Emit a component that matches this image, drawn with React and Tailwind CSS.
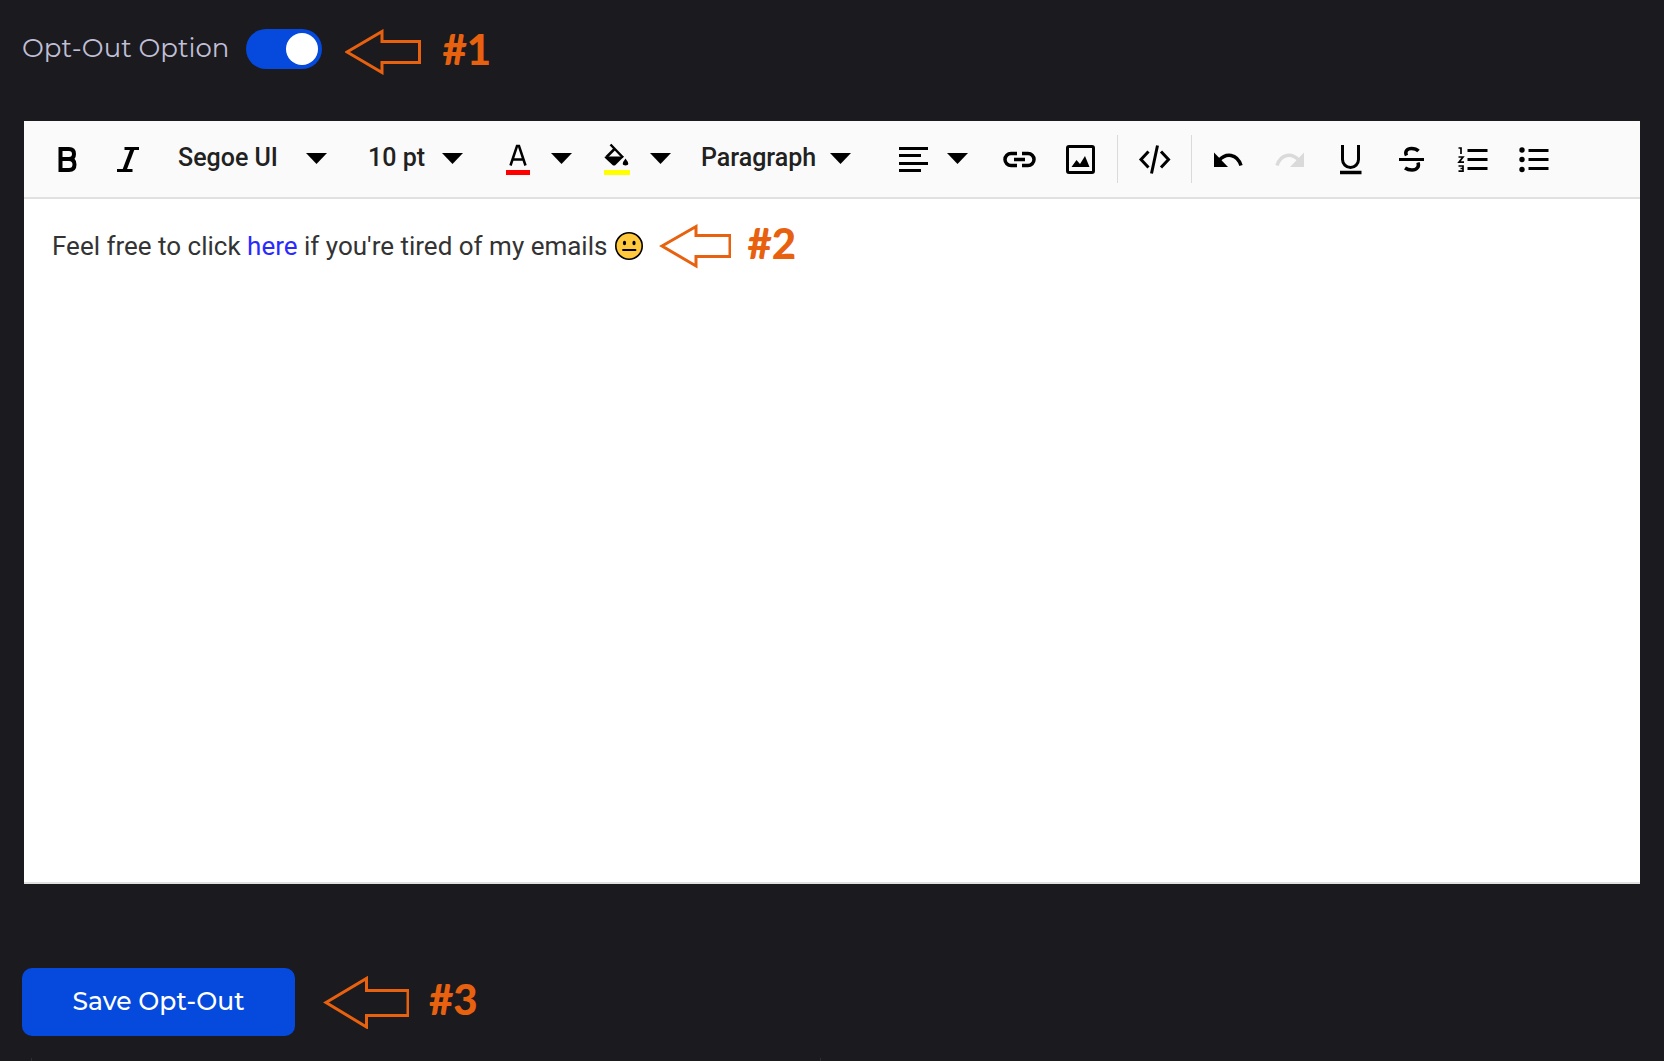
import React, { useState } from "react";

const Icon = ({ children, className = "" }) => (
  <svg
    viewBox="0 0 36 36"
    className={`h-9 w-9 ${className}`}
    fill="none"
    stroke="currentColor"
    strokeWidth="3"
    aria-hidden="true"
  >
    {children}
  </svg>
);

const Caret = ({ className = "" }) => (
  <svg viewBox="0 0 21 11" className={`h-[11px] w-[21px] ${className}`} fill="currentColor" aria-hidden="true">
    <path d="M0 0h21L10.5 11z" />
  </svg>
);

const ToolButton = ({ label, children, ...rest }) => (
  <button
    type="button"
    aria-label={label}
    className="flex h-12 w-[61px] shrink-0 items-center justify-center disabled:text-[#dadada]"
    {...rest}
  >
    {children}
  </button>
);

const SplitButton = ({ label, children }) => (
  <div className="flex shrink-0 items-center">
    <button type="button" aria-label={label} className="flex h-12 w-[60px] items-center justify-center">
      {children}
    </button>
    <button type="button" aria-label={`${label} options`} className="flex h-12 w-[26px] items-center justify-center pb-0.5">
      <Caret />
    </button>
  </div>
);

const ToolSelect = ({ label, options, className }) => {
  const [value, setValue] = useState(options[0]);
  return (
    <div className={`relative shrink-0 ${className}`}>
      <select
        aria-label={label}
        value={value}
        onChange={(e) => setValue(e.target.value)}
        className="h-12 w-full appearance-none bg-transparent pb-0.5 pl-5 text-[25px] font-medium text-[#212121]"
      >
        {options.map((o) => (
          <option key={o}>{o}</option>
        ))}
      </select>
      <Caret className="pointer-events-none absolute right-[21px] top-[18px]" />
    </div>
  );
};

const Separator = () => <div className="mx-1.5 h-12 w-px shrink-0 bg-[#dadada]" />;

const Arrow = ({ d, className }) => (
  <svg className={`shrink-0 ${className}`} fill="none" stroke="#e8610f" strokeWidth="3" aria-hidden="true">
    <path d={d} />
  </svg>
);

const Marker = ({ children }) => (
  <span className="pb-1.5 font-['Lato',sans-serif] text-[42px] font-black leading-10 text-[#e8610f]">{children}</span>
);

const Toolbar = () => (
  <div className="flex min-h-[78px] flex-wrap items-center border-b-2 border-[#e0e0e0] bg-[#fafafa] px-3 text-black">
    <ToolButton label="Bold">
      <Icon>
        <path strokeWidth="4" d="M11 8h9q5 0 5 5t-5 5h-8m8 0q5.500 0 5.500 5.500T20 29h-9M11.500 6v25" />
      </Icon>
    </ToolButton>
    <ToolButton label="Italic">
      <Icon>
        <path d="M14.500 7.500H29M7 29.500h15.500" />
        <path strokeWidth="4" d="M22.500 8l-8 21" />
      </Icon>
    </ToolButton>
    <ToolSelect label="Font" options={["Segoe UI", "Arial", "Georgia"]} className="w-[190px]" />
    <ToolSelect label="Font size" options={["10 pt", "12 pt", "14 pt"]} className="w-[136px]" />
    <div className="ml-1 flex shrink-0 items-center gap-[13px]">
      <SplitButton label="Font color">
        <Icon>
          <path strokeWidth="2.500" d="M10.500 24.500L17 5h2l6.500 19.500M12.500 18.500h11" />
          <path stroke="#ff0000" strokeWidth="5" d="M6 31.500h24" />
        </Icon>
      </SplitButton>
      <SplitButton label="Background color">
        <Icon>
          <path strokeWidth="2.500" d="M11.500 3.500l12.500 13M16 7.500l-8.500 8.500" />
          <path fill="currentColor" stroke="none" d="M6 15.500h19l-8.500 8.500q-1.500 1-3 0l-7.500-7q-1-1 0-1.500z" />
          <path fill="currentColor" stroke="none" d="M26.500 17.500q5.500 7 0 7t0-7z" />
          <path stroke="#ffff00" strokeWidth="5" d="M5 31.500h26" />
        </Icon>
      </SplitButton>
    </div>
    <ToolSelect label="Format" options={["Paragraph", "Heading 1", "Heading 2"]} className="ml-2 w-[191px]" />
    <div className="ml-3 mr-[19px] shrink-0">
      <SplitButton label="Alignment">
        <Icon>
          <path d="M3 7.500h29M3 14.500h22M3 22.500h29M3 29.500h22" />
        </Icon>
      </SplitButton>
    </div>
    <ToolButton label="Insert link">
      <Icon>
        <path strokeWidth="3.500" d="M15 12.500H9a6 6 0 0 0 0 12h6M20 12.500H26a6 6 0 0 1 0 12h-6M12 18.500h11" />
      </Icon>
    </ToolButton>
    <ToolButton label="Insert image">
      <Icon>
        <rect x="4.500" y="5.500" width="26" height="26" rx="1.500" />
        <path fill="currentColor" stroke="none" d="M8.500 26l5-7 3.500 4 5-8L26.500 26z" />
      </Icon>
    </ToolButton>
    <Separator />
    <ToolButton label="Source code">
      <Icon>
        <path d="M11.500 10.500L4 18.500l7.500 8M24 10.500l7.500 8-7.500 8M20.500 4.500L14.500 32.500" />
      </Icon>
    </ToolButton>
    <Separator />
    <ToolButton label="Undo">
      <Icon>
        <path fill="currentColor" stroke="none" d="M3 11.500V26h14z" />
        <path strokeWidth="3.500" d="M8 19.500c7-8 18-7 22 5" />
      </Icon>
    </ToolButton>
    <ToolButton label="Redo" disabled>
      <Icon>
        <path fill="currentColor" stroke="none" d="M32 11.500V26H18z" />
        <path strokeWidth="3.500" d="M27 19.500c-7-8-18-7-22 5" />
      </Icon>
    </ToolButton>
    <ToolButton label="Underline">
      <Icon>
        <path d="M9.500 4v14.500a8 8 0 0 0 16 0V4" />
        <path strokeWidth="3.500" d="M7 31.500h21.500" />
      </Icon>
    </ToolButton>
    <ToolButton label="Strikethrough">
      <Icon>
        <path strokeWidth="3.500" d="M12.500 14.500c-2-4 .5-7 5-7q4.500 0 7 2.500M24 21.500c1.500 4-1 7.500-6 7.500q-4 0-7-2" />
        <path d="M5 18.500h25" />
      </Icon>
    </ToolButton>
    <ToolButton label="Numbered list">
      <Icon>
        <path d="M12.500 9.500h20M12.500 18.500h20M12.500 27.500h20" />
        <path strokeWidth="1.700" d="M3.500 7h2.500v6M3.500 16h4.500L4 21.200h5M3.500 25H8v5.200H3.500M5.500 27.500H8" />
      </Icon>
    </ToolButton>
    <ToolButton label="Bulleted list">
      <Icon>
        <path d="M12.500 9.500h20M12.500 18.500h20M12.500 27.500h20" />
        <g fill="currentColor" stroke="none">
          <circle cx="6" cy="9" r="2.700" />
          <circle cx="6" cy="18.500" r="2.700" />
          <circle cx="6" cy="28.500" r="2.700" />
        </g>
      </Icon>
    </ToolButton>
  </div>
);

const NeutralFace = () => (
  <svg viewBox="0 0 28 28" className="h-7 w-7 shrink-0" role="img" aria-label="neutral face">
    <circle cx="14" cy="14" r="13.200" fill="#ffc83d" stroke="#000" strokeWidth="1.600" />
    <ellipse cx="9.500" cy="11" rx="1.600" ry="2.200" />
    <ellipse cx="19" cy="11" rx="1.600" ry="2.200" />
    <path d="M8 18h12.500" stroke="#000" strokeWidth="1.800" strokeLinecap="round" />
  </svg>
);

export default function App() {
  const [enabled, setEnabled] = useState(true);

  return (
    <main className="min-h-screen bg-[#1b1a1f]">
      <div className="flex h-[121px] items-start pl-[22px] pt-[29px]">
        <label
          htmlFor="opt-out"
          className="font-['Montserrat','Inter',sans-serif] text-[26px] leading-[38px] text-[#c0bfd6]"
        >
          Opt-Out Option
        </label>
        <div className="relative ml-[17px] h-10 w-[76px]">
          <input
            id="opt-out"
            type="checkbox"
            role="switch"
            checked={enabled}
            onChange={() => setEnabled(!enabled)}
            className="peer h-10 w-[76px] appearance-none rounded-full bg-[#3a3a42] checked:bg-[#0549dd]"
          />
          <span className="pointer-events-none absolute left-1 top-1 h-8 w-8 rounded-full bg-white peer-checked:left-10" />
        </div>
        <div className="ml-[23px] flex items-center gap-5">
          <Arrow className="h-[46px] w-[77px]" d="M2 23L37 2.500V12.500H74.500V33.500H37V43.500z" />
          <Marker>#1</Marker>
        </div>
      </div>

      <section className="mx-6 border-b-2 border-[#e0e0e0] bg-white font-['Roboto',sans-serif]">
        <Toolbar />
        <div className="flex min-h-[683px] items-start px-7 pt-6">
          <div className="flex items-center">
            <p className="text-[26px] leading-[46px] text-[#333333]">
              Feel free to click{" "}
              <a href="#unsubscribe" className="text-[#2a2aff]">
                here
              </a>{" "}
              if you're tired of my emails
            </p>
            <div className="ml-2 flex items-center gap-4">
              <NeutralFace />
              <Arrow className="h-[46px] w-[72px]" d="M3 23L37 3.500V12.500H71V33.500H37V43z" />
              <Marker>#2</Marker>
            </div>
          </div>
        </div>
      </section>

      <div className="mt-[84px] flex items-center pl-[22px]">
        <button
          type="button"
          className="h-[68px] w-[273px] rounded-[10px] bg-[#0549dd] font-['Montserrat','Inter',sans-serif] text-[25px] font-medium text-white"
        >
          Save Opt-Out
        </button>
        <div className="ml-7 flex items-center gap-5">
          <Arrow className="h-[54px] w-[86px]" d="M3 27.500L43.500 3.500V15.500H85V40.500H43.500V52z" />
          <Marker>#3</Marker>
        </div>
      </div>

      <div className="mt-[22px] ml-[31px] h-[3px] w-[790px] max-w-full border-x border-[#2f2e34]" />
    </main>
  );
}
